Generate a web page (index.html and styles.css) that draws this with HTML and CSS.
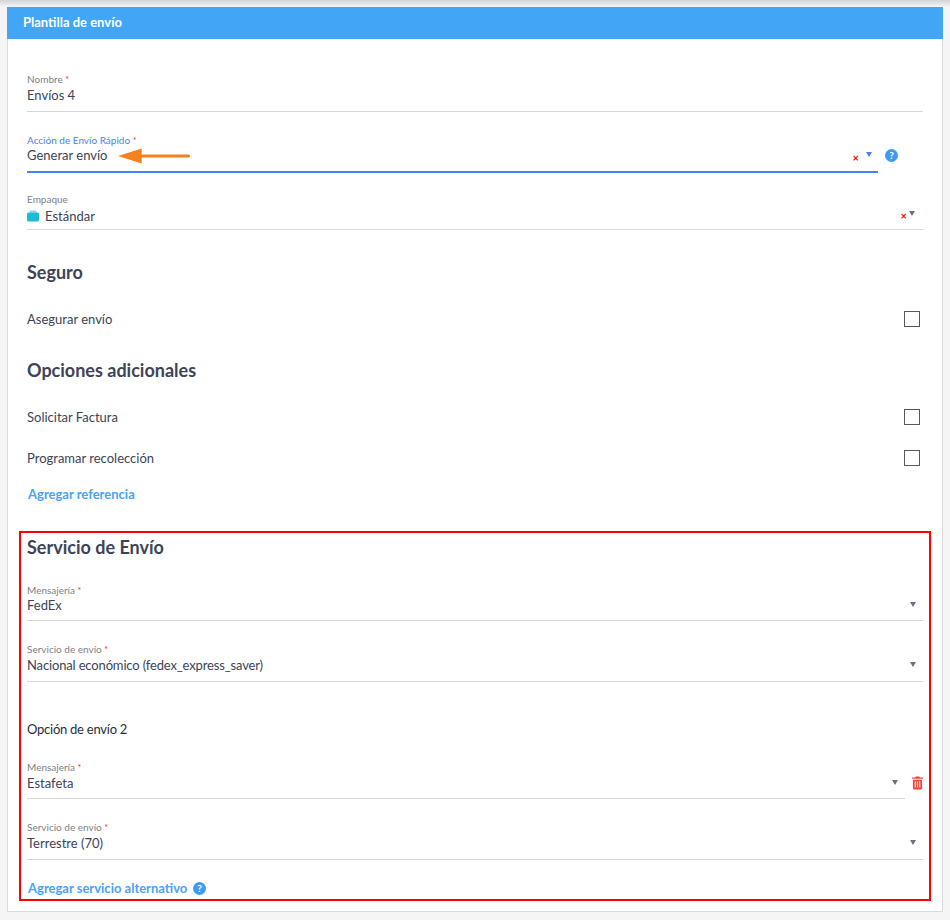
FILE: index.html
```html
<!DOCTYPE html>
<html lang="es">
<head>
<meta charset="utf-8">
<title>Plantilla de envío</title>
<link rel="stylesheet" href="styles.css">
</head>
<body>
<div class="topshade"></div>
<main class="card">
  <header class="card-head">Plantilla de envío</header>
  <div class="card-body">
    <div class="field f-nombre">
      <label class="lbl">Nombre <i class="req">*</i></label>
      <div class="val">Envíos 4</div>
    </div>

    <div class="row-help">
      <div class="field f-accion focus">
        <label class="lbl">Acción de Envío Rápido <i class="req">*</i></label>
        <div class="val">Generar envío
          <svg class="arrow" width="73" height="16" viewBox="0 0 74 16"><path d="M0 8 L24 0.5 L24 6.5 L72 6.5 Q74 8 72 9.5 L24 9.5 L24 15.5 Z" fill="#f5821f"/></svg>
          <span class="x x-a">×</span><span class="caret caret-blue"></span>
        </div>
      </div>
      <svg class="help help-top" width="13" height="13" viewBox="0 0 13 13"><circle cx="6.5" cy="6.5" r="6.5" fill="#3f9bf2"/><text x="6.5" y="10" text-anchor="middle" class="help-q">?</text></svg>
    </div>

    <div class="field f-empaque">
      <label class="lbl">Empaque</label>
      <div class="val">
        <svg class="box" width="12" height="12" viewBox="0 0 12 12"><path d="M3 0.5h6l1 2H2z" fill="#8fd8e6"/><rect x="0" y="2.5" width="12" height="9" rx="1.5" fill="#1cbcd8"/></svg>Estándar
        <span class="x x-b">×</span><span class="caret caret-b"></span>
      </div>
    </div>

    <h2 class="h h-seguro">Seguro</h2>
    <div class="check-row r-seguro"><span>Asegurar envío</span><span class="cb"></span></div>

    <h2 class="h h-opc">Opciones adicionales</h2>
    <div class="check-row r-fact"><span>Solicitar Factura</span><span class="cb"></span></div>
    <div class="check-row r-prog"><span>Programar recolección</span><span class="cb"></span></div>
    <a class="link l-ref">Agregar referencia</a>

    <section class="servicio">
      <h2 class="h h-serv">Servicio de Envío</h2>
      <div class="field f-msj">
        <label class="lbl">Mensajería <i class="req">*</i></label>
        <div class="val">FedEx<span class="caret"></span></div>
      </div>
      <div class="field f-srv">
        <label class="lbl">Servicio de envío <i class="req">*</i></label>
        <div class="val v-long">Nacional económico (fedex_express_saver)<span class="caret"></span></div>
      </div>
      <div class="opt2">Opción de envío 2</div>
      <div class="row-trash">
        <div class="field f-msj2">
          <label class="lbl">Mensajería <i class="req">*</i></label>
          <div class="val">Estafeta<span class="caret"></span></div>
        </div>
        <svg class="trash" width="11" height="14" viewBox="0 0 12 14"><path fill="#f44336" d="M4 0h4l.6 1H12v1.4H0V1h3.4zM1 3.4h10V12.6A1.4 1.4 0 0 1 9.6 14H2.4A1.4 1.4 0 0 1 1 12.6zM3 5v7h1.2V5zm2.4 0v7h1.2V5zm2.4 0v7H9V5z"/></svg>
      </div>
      <div class="field f-srv2">
        <label class="lbl">Servicio de envío <i class="req">*</i></label>
        <div class="val">Terrestre (70)<span class="caret"></span></div>
      </div>
      <div class="alt">
        <a class="link">Agregar servicio alternativo</a>
        <svg class="help" width="13" height="13" viewBox="0 0 13 13"><circle cx="6.5" cy="6.5" r="6.5" fill="#3f9bf2"/><text x="6.5" y="10" text-anchor="middle" class="help-q">?</text></svg>
      </div>
    </section>
  </div>
</main>
</body>
</html>
```
FILE: styles.css
```css
* { box-sizing: border-box; }
html, body { margin: 0; padding: 0; height: 920px; overflow: hidden; }
body { background: #f5f5f5; font-family: Lato, "Liberation Sans", sans-serif; color: #3d4457; padding: 7px 7px 0; position: relative; }
.topshade { position: absolute; top: 0; left: 0; right: 0; height: 7px; background: linear-gradient(#d4d4d4, #f5f5f5); }
.card { position: relative; width: 936px; height: 905px; background: #fff; border: 1px solid #d9dbdd; border-top: 0; }
.card-head { height: 32px; margin: 0 -1px; background: #42a5f5; color: #fff; font-size: 13px; font-weight: 700; line-height: 30px; padding-left: 16px; }
.card-body { padding: 34px 19px 0; }
.field { position: relative; width: 896px; border-bottom: 1px solid #d4d6d8; }
.lbl { display: block; font-size: 10px; line-height: 12px; color: #7b7f88; }
.req { font-style: normal; color: #e53935; font-size: 9px; }
.val { position: relative; font-size: 13px; line-height: 20px; color: #3d4457; }
.f-nombre { height: 39px; }
.f-nombre .val { margin-top: -1px; }
.row-help { display: flex; align-items: flex-start; margin-top: 22px; }
.f-accion { width: 851px; height: 39px; border-bottom: 2px solid #4285f4; }
.f-accion .lbl { color: #4c7ff0; }
.f-accion .val { margin-top: -2px; }
.help { display: block; }
.help-top { margin: 15px 0 0 7px; }
.help-q { font: 700 10px Lato, sans-serif; fill: #fff; }
.arrow { position: absolute; left: 91px; top: 3px; }
.f-empaque { margin-top: 20px; height: 37px; }
.f-empaque .val { display: flex; align-items: center; margin-top: 1px; }
.box { margin-right: 6px; }
.x { position: absolute; color: #f00; font-size: 11px; line-height: 10px; font-weight: 700; }
.x-a { right: 19px; top: 8px; }
.x-b { right: 16px; top: 5px; }
.caret { position: absolute; right: 7px; top: 7px; width: 0; height: 0; border: 3px solid transparent; border-top: 5px solid #6b7280; border-bottom: 0; }
.caret-blue { border-top-color: #4c7ff0; right: 6px; top: 7px; }
.caret-b { right: 8px; top: 5px; }
.h { margin: 0; font-size: 18px; font-weight: 700; line-height: 22px; color: #3d4457; }
.h-seguro { margin-top: 31px; }
.check-row { display: flex; justify-content: space-between; align-items: center; font-size: 13px; height: 18px; padding-right: 3px; }
.cb { width: 16px; height: 16px; border: 1.5px solid #555960; }
.r-seguro { margin-top: 27px; }
.h-opc { margin-top: 31px; }
.r-fact { margin-top: 27px; }
.r-prog { margin-top: 23px; }
.link { color: #4aa3f5; font-size: 13px; font-weight: 700; margin-left: 1px; }
.l-ref { display: block; margin-top: 19px; line-height: 16px; }
.servicio { margin: 29px -8px 0; width: 912px; height: 370px; border: 2px solid #f00; padding: 3px 6px 0; }
.servicio .field { width: 896px; }
.f-msj { margin-top: 26px; height: 37px; }
.f-msj .val { margin-top: -2px; }
.f-srv { margin-top: 22px; height: 39px; }
.f-srv .val { margin-top: -1px; }
.v-long { letter-spacing: -0.15px; }
.opt2 { margin-top: 38px; font-size: 13px; line-height: 18px; color: #2a2d38; letter-spacing: -0.25px; }
.row-trash { display: flex; align-items: flex-start; margin-top: 23px; width: 896px; }
.servicio .f-msj2 { width: 878px; height: 38px; }
.f-msj2 .val { margin-top: -1px; }
.trash { margin: 15px 0 0 7px; flex: none; }
.f-srv2 { margin-top: 22px; height: 39px; }
.f-srv2 .val { margin-top: -1px; }
.alt { display: flex; align-items: center; gap: 6px; margin-top: 20px; line-height: 16px; }
```
